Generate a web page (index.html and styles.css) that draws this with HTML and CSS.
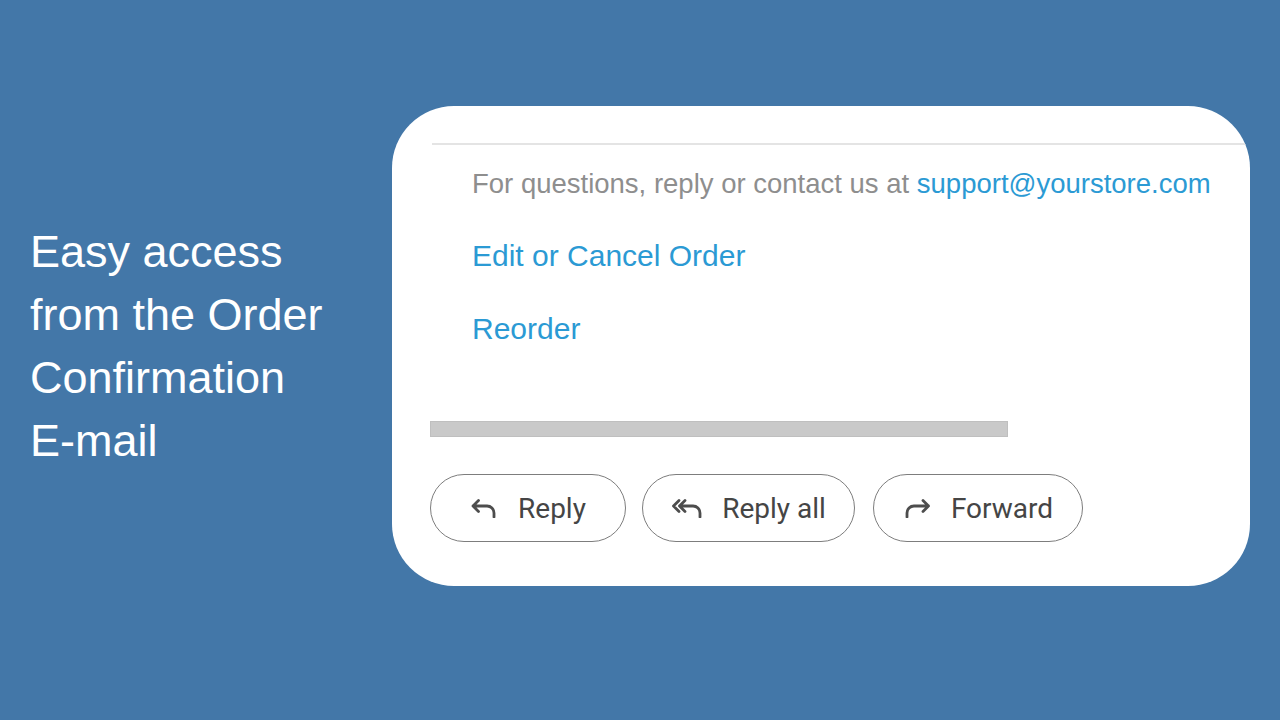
FILE: index.html
```html
<!DOCTYPE html>
<html lang="en">
<head>
<meta charset="utf-8">
<title>Easy access from the Order Confirmation E-mail</title>
<link rel="stylesheet" href="styles.css">
</head>
<body>
<main class="page">
  <h1 class="intro">Easy access<br>from the Order<br>Confirmation<br>E-mail</h1>
  <section class="card">
    <hr class="rule">
    <div class="links">
      <p class="note">For questions, reply or contact us at <a class="link" href="#">support@yourstore.com</a></p>
      <a class="action first" href="#">Edit or Cancel Order</a>
      <a class="action" href="#">Reorder</a>
    </div>
    <div class="scrollbar"></div>
    <div class="buttons">
      <button class="btn btn-reply">
        <svg class="icon" width="28" height="20" viewBox="0 0 28 20"><path d="M8.5 2.5 L3 8 L8.5 13.5 M3 8 H17 A7 7 0 0 1 24 15 V19" fill="none" stroke="#4d4d4d" stroke-width="2.8" stroke-linecap="round" stroke-linejoin="round"/></svg>
        <span>Reply</span>
      </button>
      <button class="btn btn-all">
        <svg class="icon" width="33" height="20" viewBox="0 0 33 20"><path d="M8 2.5 L2.5 8 L8 13.5 M14 2.5 L8.5 8 L14 13.5 M8.5 8 H22 A7 7 0 0 1 29 15 V19" fill="none" stroke="#4d4d4d" stroke-width="2.8" stroke-linecap="round" stroke-linejoin="round"/></svg>
        <span>Reply all</span>
      </button>
      <button class="btn btn-fwd">
        <svg class="icon" width="29" height="20" viewBox="0 0 29 20"><path d="M20 2.5 L25.5 8 L20 13.5 M25.5 8 H11 A7 7 0 0 0 4 15 V19" fill="none" stroke="#4d4d4d" stroke-width="2.8" stroke-linecap="round" stroke-linejoin="round"/></svg>
        <span>Forward</span>
      </button>
    </div>
  </section>
</main>
</body>
</html>
```
FILE: styles.css
```css
* { box-sizing: border-box; }
html, body {
  margin: 0;
  padding: 0;
}
body {
  width: 1280px;
  height: 720px;
  overflow: hidden;
  background: #4377a8;
  font-family: "Liberation Sans", Arial, sans-serif;
}
.page {
  display: flex;
  align-items: flex-start;
  padding-top: 106px;
  height: 720px;
}
.intro {
  width: 392px;
  margin: 114px 0 0;
  padding-left: 30px;
  color: #ffffff;
  font-weight: 400;
  font-size: 45px;
  line-height: 63px;
}
.card {
  width: 858px;
  height: 480px;
  background: #ffffff;
  border-radius: 62px;
  overflow: hidden;
  padding: 37px 0 0 38px;
}
.rule {
  margin: 0 -40px 0 2px;
  border: 0;
  height: 2px;
  background: #e4e4e4;
}
.links {
  display: flex;
  flex-direction: column;
  align-items: flex-start;
  padding-left: 42px;
}
.note {
  margin: 23px 0 0;
  font-size: 27.5px;
  line-height: 32px;
  color: #8e8e8e;
}
.link {
  color: #2b9ad4;
  text-decoration: none;
}
.action {
  display: block;
  color: #2b9ad4;
  text-decoration: none;
  font-size: 30px;
  line-height: 36px;
  margin-top: 37px;
}
.action.first {
  margin-top: 38px;
}
.scrollbar {
  width: 578px;
  height: 16px;
  margin-top: 74px;
  background: #c9c9c9;
  border: 1px solid #bfbfbf;
}
.buttons {
  display: flex;
  gap: 16px;
  margin-top: 37px;
}
.btn {
  display: flex;
  align-items: center;
  justify-content: center;
  gap: 20px;
  height: 68px;
  padding: 0;
  background: #ffffff;
  border: 1.5px solid #7d7d7d;
  border-radius: 34px;
  font-family: Roboto, "Liberation Sans", sans-serif;
  font-size: 28px;
  color: #454545;
}
.btn-reply { width: 196px; }
.btn-all { width: 213px; gap: 18px; }
.btn-fwd { width: 210px; margin-left: 2px; gap: 19px; }
.icon { display: block; flex: none; }
```
